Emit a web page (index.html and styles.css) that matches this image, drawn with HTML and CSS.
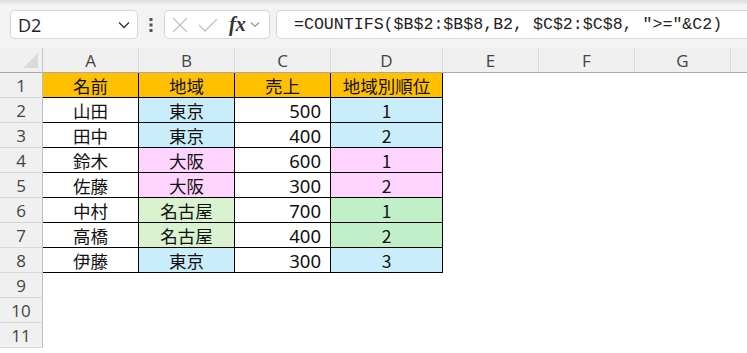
FILE: index.html
```html
<!DOCTYPE html>
<html lang="ja">
<head>
<meta charset="utf-8">
<link rel="stylesheet" href="styles.css">
</head>
<body>
<div class="app">
  <div class="topstrip"></div>
  <div class="toolbar">
    <div class="namebox">
      <span class="name">D2</span>
      <svg class="chev" width="12" height="8" viewBox="0 0 12 8"><path d="M1 1.5 L6 6.5 L11 1.5" fill="none" stroke="#333" stroke-width="1.3"/></svg>
    </div>
    <div class="kebab">
      <svg width="4" height="14" viewBox="0 0 4 14"><rect x="0.5" y="0" width="3" height="3" fill="#555"/><rect x="0.5" y="5.5" width="3" height="3" fill="#555"/><rect x="0.5" y="11" width="3" height="3" fill="#555"/></svg>
    </div>
    <div class="fnbox">
      <svg class="ico" width="16" height="16" viewBox="0 0 16 16"><path d="M1 1 L15 15 M15 1 L1 15" stroke="#c2c2c2" stroke-width="1.3" fill="none"/></svg>
      <svg class="ico" width="20" height="16" viewBox="0 0 20 16"><path d="M1 8 L7 14 L19 2" stroke="#c2c2c2" stroke-width="1.3" fill="none"/></svg>
      <span class="fx">fx</span>
      <svg class="chev2" width="10" height="7" viewBox="0 0 10 7"><path d="M1 1.5 L5 5.5 L9 1.5" fill="none" stroke="#999" stroke-width="1.2"/></svg>
    </div>
    <div class="formula">=COUNTIFS($B$2:$B$8,B2, $C$2:$C$8, "&gt;="&amp;C2)</div>
  </div>

  <div class="sheet">
    <div class="corner"><span class="tri"></span></div>
    <div class="ch">A</div><div class="ch">B</div><div class="ch">C</div><div class="ch">D</div>
    <div class="ch">E</div><div class="ch">F</div><div class="ch">G</div><div class="ch last"></div>

    <div class="rh">1</div>
    <div class="c hd">名前</div><div class="c hd">地域</div><div class="c hd">売上</div><div class="c hd">地域別順位</div>
    <div class="rest"></div>

    <div class="rh">2</div>
    <div class="c">山田</div><div class="c blue">東京</div><div class="c num">500</div><div class="c blue">1</div>
    <div class="rest"></div>

    <div class="rh">3</div>
    <div class="c">田中</div><div class="c blue">東京</div><div class="c num">400</div><div class="c blue">2</div>
    <div class="rest"></div>

    <div class="rh">4</div>
    <div class="c">鈴木</div><div class="c pink">大阪</div><div class="c num">600</div><div class="c pink">1</div>
    <div class="rest"></div>

    <div class="rh">5</div>
    <div class="c">佐藤</div><div class="c pink">大阪</div><div class="c num">300</div><div class="c pink">2</div>
    <div class="rest"></div>

    <div class="rh">6</div>
    <div class="c">中村</div><div class="c green1">名古屋</div><div class="c num">700</div><div class="c green2">1</div>
    <div class="rest"></div>

    <div class="rh">7</div>
    <div class="c">高橋</div><div class="c green1">名古屋</div><div class="c num">400</div><div class="c green2">2</div>
    <div class="rest"></div>

    <div class="rh">8</div>
    <div class="c">伊藤</div><div class="c blue">東京</div><div class="c num">300</div><div class="c blue">3</div>
    <div class="rest"></div>

    <div class="rh">9</div><div class="empty"></div>
    <div class="rh">10</div><div class="empty"></div>
    <div class="rh">11</div><div class="empty"></div>
  </div>
</div>
</body>
</html>
```

FILE: styles.css
```css
* { box-sizing: border-box; }
html, body { margin: 0; padding: 0; }
body {
  width: 747px;
  height: 353px;
  overflow: hidden;
  background: #ffffff;
  font-family: "Noto Sans CJK JP", "Noto Sans", sans-serif;
}
.app { width: 747px; }

.topstrip {
  height: 4px;
  background: linear-gradient(#dedede, #ececec);
}

.toolbar {
  height: 44px;
  background: #f3f3f3;
  display: flex;
  align-items: flex-start;
  padding: 6px 0 0 10px;
}

.namebox {
  width: 128px;
  height: 29px;
  background: #fff;
  border: 1px solid #d6d6d6;
  border-radius: 5px;
  display: flex;
  align-items: center;
  justify-content: space-between;
  padding: 0 7px 0 7px;
}
.name {
  font-family: "Open Sans", "Liberation Sans", sans-serif;
  font-size: 18px;
  color: #222;
  line-height: 1;
}
.chev { display: block; }

.kebab {
  width: 26px;
  height: 29px;
  display: flex;
  align-items: center;
  justify-content: center;
}
.kebab svg { display: block; }

.fnbox {
  width: 106px;
  height: 29px;
  background: #fff;
  border: 1px solid #d6d6d6;
  border-radius: 5px;
  display: flex;
  align-items: center;
  padding: 0 0 0 7px;
}
.fnbox .ico { display: block; margin-right: 10px; }
.fnbox .ico + .ico { margin-right: 11px; }
.fx {
  font-family: "Liberation Serif", "DejaVu Serif", serif;
  font-style: italic;
  font-weight: bold;
  font-size: 20px;
  color: #333;
  line-height: 1;
  margin-top: -2px;
}
.chev2 { display: block; margin-left: 4px; }

.formula {
  flex: 1;
  height: 29px;
  margin-left: 6px;
  margin-right: -6px;
  background: #fff;
  border: 1px solid #d6d6d6;
  border-radius: 5px;
  font-family: "Liberation Mono", "DejaVu Sans Mono", monospace;
  font-size: 16.6px;
  color: #222;
  line-height: 27px;
  padding-left: 17px;
  white-space: nowrap;
  overflow: hidden;
}

.sheet {
  display: grid;
  grid-template-columns: 43px 96px 96px 96px 112px 96px 96px 96px 1fr;
  grid-template-rows: 25px repeat(11, 25px);
}

.corner {
  background: #f0f0f0;
  border-right: 1px solid #c6c6c6;
  border-bottom: 1px solid #a9a9a9;
  position: relative;
}
.tri {
  position: absolute;
  right: 4px;
  bottom: 4px;
  width: 0;
  height: 0;
  border-left: 15px solid transparent;
  border-bottom: 15px solid #dadada;
}

.ch {
  background: #f0f0f0;
  border-right: 1px solid #d9d9d9;
  border-bottom: 1px solid #a9a9a9;
  font-family: "Open Sans", "Liberation Sans", sans-serif;
  font-size: 17px;
  color: #444;
  display: flex;
  align-items: center;
  justify-content: center;
  padding-top: 1px;
}
.ch.last { border-right: none; }

.rh {
  background: #f0f0f0;
  border-right: 1px solid #bdbdbd;
  border-bottom: 1px solid #d9d9d9;
  font-family: "Open Sans", "Liberation Sans", sans-serif;
  font-size: 17px;
  color: #444;
  display: flex;
  align-items: center;
  justify-content: center;
  padding-top: 1px;
}

.c {
  border-right: 1px solid #000;
  border-bottom: 1px solid #000;
  font-size: 17.5px;
  color: #111;
  display: flex;
  align-items: center;
  justify-content: center;
  padding-top: 1px;
  white-space: nowrap;
}
.c.num {
  justify-content: flex-end;
  padding-right: 9px;
  font-family: "Noto Sans", "Open Sans", sans-serif;
  font-size: 18.5px;
}
.hd { background: #ffc000; }
.blue { background: #caedfb; }
.pink { background: #ffd5ff; }
.green1 { background: #daf2d0; }
.green2 { background: #c1f0c8; }

.rest { grid-column: 6 / -1; }
.empty { grid-column: 2 / -1; }
```
